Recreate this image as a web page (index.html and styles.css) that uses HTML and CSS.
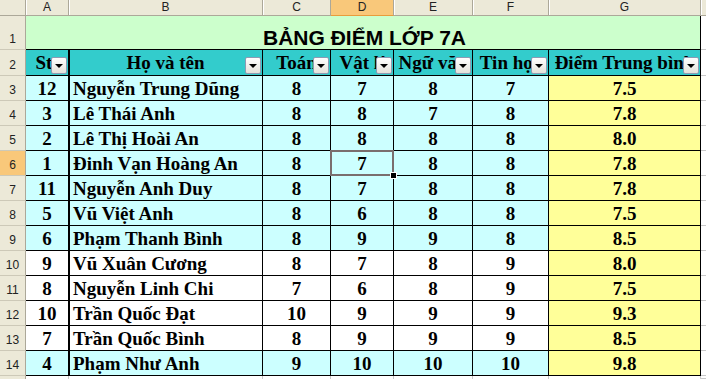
FILE: index.html
```html
<!DOCTYPE html>
<html lang="vi">
<head>
<meta charset="utf-8">
<title>Bảng điểm lớp 7A</title>
<link rel="stylesheet" href="styles.css">
</head>
<body>
<div class="sheet">
  <div class="ch corner"></div>
  <div class="ch">A</div><div class="ch">B</div><div class="ch">C</div><div class="ch sel">D</div><div class="ch">E</div><div class="ch">F</div><div class="ch">G</div><div class="ch last"></div>

  <div class="rh">1</div>
  <div class="title">BẢNG ĐIỂM LỚP 7A</div>
  <div class="empty"></div>

  <div class="rh">2</div>
  <div class="hd">Stt<span class="flt"></span></div>
  <div class="hd nm-h">Họ và tên<span class="flt"></span></div>
  <div class="hd">Toán<span class="flt"></span></div>
  <div class="hd">Vật lí<span class="flt"></span></div>
  <div class="hd">Ngữ văn<span class="flt"></span></div>
  <div class="hd">Tin học<span class="flt"></span></div>
  <div class="hd">Điểm Trung bình<span class="flt"></span></div>
  <div class="empty"></div>

  <div class="rh">3</div><div class="d">12</div><div class="d nm">Nguyễn Trung Dũng</div><div class="d">8</div><div class="d">7</div><div class="d">8</div><div class="d">7</div><div class="d avg">7.5</div><div class="empty"></div>
  <div class="rh">4</div><div class="d">3</div><div class="d nm">Lê Thái Anh</div><div class="d">8</div><div class="d">8</div><div class="d">7</div><div class="d">8</div><div class="d avg">7.8</div><div class="empty"></div>
  <div class="rh">5</div><div class="d">2</div><div class="d nm">Lê Thị Hoài An</div><div class="d">8</div><div class="d">8</div><div class="d">8</div><div class="d">8</div><div class="d avg">8.0</div><div class="empty"></div>
  <div class="rh sel">6</div><div class="d">1</div><div class="d nm">Đinh Vạn Hoàng An</div><div class="d">8</div><div class="d active">7<span class="selbox"></span><span class="handle"></span></div><div class="d">8</div><div class="d">8</div><div class="d avg">7.8</div><div class="empty"></div>
  <div class="rh">7</div><div class="d">11</div><div class="d nm">Nguyễn Anh Duy</div><div class="d">8</div><div class="d">7</div><div class="d">8</div><div class="d">8</div><div class="d avg">7.8</div><div class="empty"></div>
  <div class="rh">8</div><div class="d">5</div><div class="d nm">Vũ Việt Anh</div><div class="d">8</div><div class="d">6</div><div class="d">8</div><div class="d">8</div><div class="d avg">7.5</div><div class="empty"></div>
  <div class="rh">9</div><div class="d">6</div><div class="d nm">Phạm Thanh Bình</div><div class="d">8</div><div class="d">9</div><div class="d">9</div><div class="d">8</div><div class="d avg">8.5</div><div class="empty"></div>
  <div class="rh">10</div><div class="d w">9</div><div class="d w nm">Vũ Xuân Cương</div><div class="d w">8</div><div class="d w">7</div><div class="d w">8</div><div class="d w">9</div><div class="d avg">8.0</div><div class="empty"></div>
  <div class="rh">11</div><div class="d w">8</div><div class="d w nm">Nguyễn Linh Chi</div><div class="d w">7</div><div class="d w">6</div><div class="d w">8</div><div class="d w">9</div><div class="d avg">7.5</div><div class="empty"></div>
  <div class="rh">12</div><div class="d w">10</div><div class="d w nm">Trần Quốc Đạt</div><div class="d w">10</div><div class="d w">9</div><div class="d w">9</div><div class="d w">9</div><div class="d avg">9.3</div><div class="empty"></div>
  <div class="rh">13</div><div class="d w">7</div><div class="d w nm">Trần Quốc Bình</div><div class="d w">8</div><div class="d w">9</div><div class="d w">9</div><div class="d w">9</div><div class="d avg">8.5</div><div class="empty"></div>
  <div class="rh">14</div><div class="d">4</div><div class="d nm">Phạm Như Anh</div><div class="d">9</div><div class="d">10</div><div class="d">10</div><div class="d">10</div><div class="d avg">9.8</div><div class="empty"></div>

  <div class="rh"></div><div class="g"></div><div class="g"></div><div class="g"></div><div class="g"></div><div class="g"></div><div class="g"></div><div class="g"></div><div class="empty"></div>
</div>
</body>
</html>
```

FILE: styles.css
```css
body {
  margin: 0;
  background: #fff;
}

.sheet {
  display: grid;
  grid-template-columns: 26px 43px 194px 68px 63px 79px 76px 152px 5px;
  grid-template-rows: 16px 34px 26px repeat(12, 25px) 3px;
  width: 706px;
  height: 379px;
  overflow: hidden;
}

.sheet > div {
  box-sizing: border-box;
  min-width: 0;
  overflow: hidden;
  white-space: nowrap;
}

.ch {
  background: #ece9d8;
  border-right: 1px solid #aca899;
  border-bottom: 1px solid #aca899;
  box-shadow: inset 1px 0 0 #fff;
  font: 12px "Liberation Sans", Arial, sans-serif;
  color: #222;
  text-align: center;
  line-height: 15px;
}

.ch.corner {
  box-shadow: none;
}

.ch.sel {
  background: #f9c87a;
  border-bottom: 1px solid #e99c3c;
  box-shadow: none;
}

.ch.last {
  border-right: none;
}

.rh {
  background: #ece9d8;
  border-right: 1px solid #aca899;
  border-bottom: 1px solid #cdc9b8;
  font: 12px "Liberation Sans", Arial, sans-serif;
  color: #222;
  display: flex;
  align-items: flex-end;
  justify-content: center;
  padding-bottom: 3px;
}

.rh.sel {
  background: #f9c87a;
}

.title {
  grid-column: span 7;
  background: #ccffcc;
  border-bottom: 1px solid #000;
  border-right: 1px solid #000;
  font: bold 21px "Liberation Sans", Arial, sans-serif;
  line-height: 21px;
  color: #000;
  display: flex;
  align-items: flex-end;
  justify-content: center;
  padding-left: 3px;
  padding-bottom: 1px;
}

.empty {
  background: #fff;
  border-bottom: 1px solid #c8c8c8;
}

.hd {
  position: relative;
  background: #33cccc;
  border-right: 1px solid #000;
  border-bottom: 1px solid #000;
  font: bold 19px "Liberation Serif", "Times New Roman", serif;
  color: #000;
  text-align: center;
  line-height: 25px;
}

.hd.nm-h {
  box-shadow: inset 1px 0 0 #000;
}

.flt {
  position: absolute;
  right: 1px;
  bottom: 1px;
  width: 14px;
  height: 15px;
  border: 1px solid #8d9bb4;
  border-radius: 2px;
  background: linear-gradient(#ffffff, #e4e2da);
}

.flt::after {
  content: "";
  position: absolute;
  left: 3px;
  top: 6px;
  border-left: 4px solid transparent;
  border-right: 4px solid transparent;
  border-top: 4px solid #000;
}

.d {
  position: relative;
  background: #ccffff;
  border-right: 1px solid #000;
  border-bottom: 1px solid #000;
  font: bold 19px "Liberation Serif", "Times New Roman", serif;
  color: #000;
  text-align: center;
  line-height: 25px;
}

.sheet > .d.active {
  overflow: visible;
}

.d.w {
  background: #fff;
}

.d.nm {
  text-align: left;
  padding-left: 4px;
  box-shadow: inset 1px 0 0 #000;
}

.d.avg {
  background: #ffff99;
}

.selbox {
  position: absolute;
  left: -1px;
  top: -1px;
  right: -1px;
  bottom: -1px;
  border: 2px solid #7a6e6e;
}

.handle {
  position: absolute;
  right: -4px;
  bottom: -4px;
  width: 5px;
  height: 5px;
  background: #000;
  border: 1px solid #fff;
  z-index: 2;
}

.g {
  background: #fff;
  border-right: 1px solid #c8c8c8;
}
```
